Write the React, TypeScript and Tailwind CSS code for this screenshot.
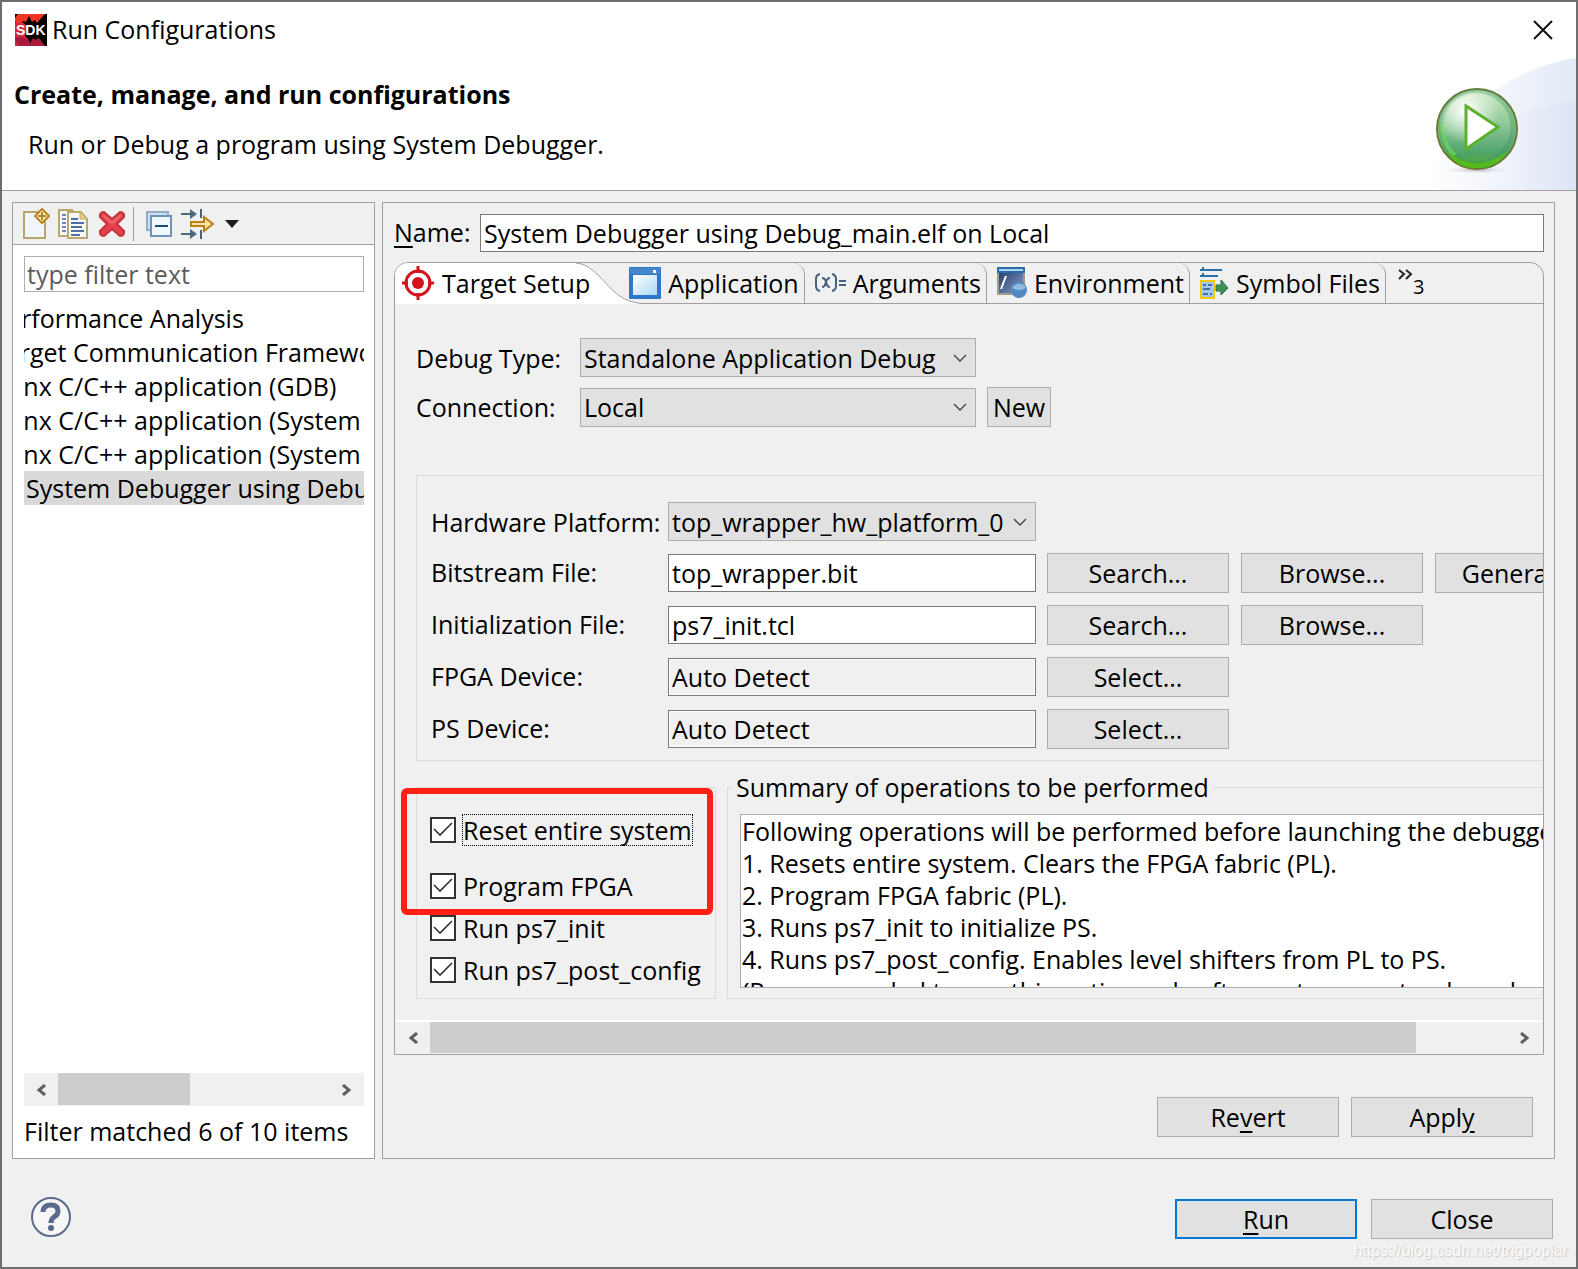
import { useState, type ReactNode } from "react";

const launchItems = [
  { label: "Performance Analysis", cut: "-ml-8" },
  { label: "Target Communication Framework", cut: "-ml-8" },
  { label: "Xilinx C/C++ application (GDB)", cut: "-ml-[34px]" },
  { label: "Xilinx C/C++ application (System Debugger)", cut: "-ml-[34px]" },
  { label: "Xilinx C/C++ application (System Debugger on QEMU)", cut: "-ml-[34px]" },
];

const summary = `Following operations will be performed before launching the debugger.
1. Resets entire system. Clears the FPGA fabric (PL).
2. Program FPGA fabric (PL).
3. Runs ps7_init to initialize PS.
4. Runs ps7_post_config. Enables level shifters from PL to PS.
(Recommended to use this option only after system reset or board power ON).`;

function SdkIcon() {
  return (
    <svg width="32" height="32" viewBox="0 0 32 32">
      <rect width="32" height="32" fill="#000" />
      <path d="M3 0H30L22 9L20 6L17 8L14 2L11 8L8 7L6 12L0 8V4Z" fill="#ee3524" />
      <path d="M0 9H9L12 13L10 22L13 25L9 32H0Z" fill="#d5283a" />
      <path d="M4 32L0 26V23H9L11 26L13 24L15 29L18 24L20 26L24 24L30 32Z" fill="#a8193d" />
      <text x="1" y="21" fontSize="14" fontWeight="bold" fill="#fff" fontFamily="Liberation Sans, sans-serif">
        SDK
      </text>
    </svg>
  );
}

function RunBadge() {
  return (
    <svg width="88" height="90" viewBox="0 0 88 90">
      <defs>
        <linearGradient id="ball" x1="0" y1="0" x2="0" y2="1">
          <stop offset="0" stopColor="#c9e9bd" />
          <stop offset="0.45" stopColor="#8cc795" />
          <stop offset="0.8" stopColor="#4fa36c" />
          <stop offset="1" stopColor="#52b51f" />
        </linearGradient>
        <radialGradient id="shine" cx="0.35" cy="0.25" r="0.45">
          <stop offset="0" stopColor="#fff" />
          <stop offset="1" stopColor="#fff" stopOpacity="0" />
        </radialGradient>
        <radialGradient id="shade">
          <stop offset="0" stopColor="#a99aa9" stopOpacity="0.8" />
          <stop offset="1" stopColor="#fff" stopOpacity="0" />
        </radialGradient>
      </defs>
      <ellipse cx="42" cy="83" rx="38" ry="4" fill="url(#shade)" />
      <circle cx="42" cy="42" r="40" fill="url(#ball)" stroke="#6c7a34" strokeWidth="2" />
      <circle cx="42" cy="40" r="36" fill="none" stroke="#3f9160" strokeWidth="5" opacity="0.35" />
      <path d="M8 36A35 35 0 0 0 20 68" fill="none" stroke="#6fdc5c" strokeWidth="4" opacity="0.7" />
      <path d="M12 64Q42 89 72 64Q64 81 42 81Q20 81 12 64Z" fill="#53bb1c" />
      <circle cx="42" cy="42" r="37" fill="url(#shine)" />
      <path d="M31 19L63 40L31 62Z" fill="#fff" stroke="#5bb12e" strokeWidth="3" />
    </svg>
  );
}

function HeaderSwoosh() {
  return (
    <svg className="absolute right-0 bottom-0" width="150" height="134" viewBox="0 0 150 134">
      <defs>
        <linearGradient id="swoosh" x1="0" y1="0" x2="1" y2="0">
          <stop offset="0" stopColor="#fff" />
          <stop offset="1" stopColor="#e3eaf8" />
        </linearGradient>
        <linearGradient id="swoosh2" x1="0" y1="0" x2="1" y2="0">
          <stop offset="0" stopColor="#fff" stopOpacity="0" />
          <stop offset="1" stopColor="#dde3f6" />
        </linearGradient>
      </defs>
      <path d="M0 134Q40 20 150 2V134Z" fill="url(#swoosh)" />
      <path d="M10 134Q60 50 150 46V134Z" fill="url(#swoosh2)" />
    </svg>
  );
}

function NewIcon() {
  return (
    <svg width="28" height="32" viewBox="0 0 28 32">
      <path d="M2 4H23V30H2Z" fill="#f1f6fd" stroke="#b5a66c" strokeWidth="2" />
      <path d="M20 1L27 8L20 15L13 8Z" fill="#fdf3cb" stroke="#b5851b" strokeWidth="2" />
      <path d="M20 4V12M16 8H24" stroke="#b5851b" strokeWidth="2" />
    </svg>
  );
}

function CopyIcon() {
  return (
    <svg width="32" height="32" viewBox="0 0 32 32">
      <path d="M2 2H15L20 7V28H2Z" fill="#f6f8fb" stroke="#b9a76c" strokeWidth="2" />
      <path d="M5 7H9M5 11H9M5 15H9M5 19H9M5 23H9" stroke="#7288b4" strokeWidth="2" />
      <path d="M11 4H24L30 11V30H11Z" fill="#f6f8fb" stroke="#b9a76c" strokeWidth="2" />
      <path d="M23 4V11H30Z" fill="#e3cf86" stroke="#c6ae66" />
      <path d="M14 11H21M14 15H27M14 19H25M14 23H27M14 27H23" stroke="#4e6ea8" strokeWidth="2" />
    </svg>
  );
}

function DeleteIcon() {
  return (
    <svg width="28" height="28" viewBox="0 0 28 28">
      <path
        d="M6 2L14 9L22 2Q27 2 26 7L19 14L26 21Q27 26 22 26L14 19L6 26Q1 26 2 21L9 14L2 7Q1 2 6 2Z"
        fill="#e2404a"
        stroke="#c9343c"
        strokeWidth="2"
      />
      <path d="M5 5L14 13L23 5" fill="none" stroke="#ec6d70" strokeWidth="2" />
    </svg>
  );
}

function CollapseIcon() {
  return (
    <svg width="28" height="28" viewBox="0 0 28 28">
      <path d="M2 20V2H23V20Z" fill="#cfe0f1" stroke="#93acc7" strokeWidth="2" />
      <path d="M6 6H26V26H6Z" fill="#f0f8fe" stroke="#6f93b8" strokeWidth="2" />
      <path d="M10 16H23" stroke="#154a7d" strokeWidth="2" />
    </svg>
  );
}

function FilterIcon() {
  return (
    <svg width="33" height="32" viewBox="0 0 33 32">
      <path d="M0 6H11M0 26H11" stroke="#4a6b7c" strokeWidth="2" />
      <path d="M9 1L16 6L9 11ZM9 21L16 26L9 31Z" fill="#4a6b7c" />
      <path d="M20 1V10M20 22V31" stroke="#4a6077" strokeWidth="2" />
      <path d="M10 14H23V9L32 16L23 23V18H10Z" fill="#fbe3a3" stroke="#bd7f16" strokeWidth="2" />
    </svg>
  );
}

function TargetIcon() {
  return (
    <svg width="32" height="34" viewBox="0 0 32 34">
      <circle cx="16" cy="17" r="12" fill="#fff" stroke="#d4121c" strokeWidth="3" />
      <circle cx="16" cy="17" r="6" fill="#d4121c" />
      <path d="M16 0V7M16 27V34M0 17H6M26 17H32" stroke="#d4121c" strokeWidth="3" />
    </svg>
  );
}

function WindowIcon() {
  return (
    <svg width="32" height="32" viewBox="0 0 32 32">
      <defs>
        <linearGradient id="pane" x1="0" y1="0" x2="1" y2="1">
          <stop offset="0" stopColor="#fff" />
          <stop offset="1" stopColor="#a9d9f3" />
        </linearGradient>
      </defs>
      <rect width="32" height="32" rx="1" fill="#2f77cb" />
      <rect x="1" y="1" width="30" height="6" fill="#4488c8" />
      <rect x="4" y="8" width="24" height="20" fill="url(#pane)" />
      <rect x="24" y="3" width="3" height="3" fill="#fff" />
    </svg>
  );
}

function ArgsIcon() {
  return (
    <svg width="31" height="20" viewBox="0 0 31 20" fill="none" stroke="#47607f" strokeWidth="2">
      <path d="M5 1Q1 2 1 6V13Q1 17 5 18M17 1Q21 2 21 6V13Q21 17 17 18" />
      <path d="M7 5Q10 5 11 9Q12 14 15 14M15 5Q12 5 11 9Q10 14 7 14" />
      <path d="M24 8H31M24 12H31" />
    </svg>
  );
}

function EnvIcon() {
  return (
    <svg width="30" height="32" viewBox="0 0 30 32">
      <defs>
        <linearGradient id="term" x1="0" y1="0" x2="1" y2="1">
          <stop offset="0" stopColor="#1b3267" />
          <stop offset="1" stopColor="#8ba3c8" />
        </linearGradient>
      </defs>
      <rect x="1" y="1" width="26" height="26" fill="url(#term)" stroke="#a39c8a" strokeWidth="2" />
      <rect width="28" height="6" fill="#2f6aa9" />
      <path d="M2 3H26" stroke="#a7d5ef" strokeWidth="2" />
      <path d="M4 22L9 9" stroke="#fff" strokeWidth="2" />
      <circle cx="22" cy="23" r="8" fill="#5289c4" />
      <path d="M15 21A8 8 0 0 1 29 21Q22 25 15 21Z" fill="#93b9df" />
    </svg>
  );
}

function SymbolIcon() {
  return (
    <svg width="29" height="32" viewBox="0 0 29 32">
      <path d="M0 3H22M0 9H18" stroke="#2c6da3" strokeWidth="2" />
      <path d="M3 0V4M3 6V10" stroke="#2c6da3" strokeWidth="2" />
      <rect x="1" y="14" width="13" height="17" fill="#9fc8f5" stroke="#fbc800" strokeWidth="2" />
      <path d="M3 18H6M8 18H12M3 22H10M3 27H8M10 27H12" stroke="#53699c" strokeWidth="2" />
      <path d="M16 18H21V13L28 21L21 28V24H16Z" fill="#3f9450" stroke="#206f4b" />
    </svg>
  );
}

function HelpIcon() {
  return (
    <svg width="40" height="40" viewBox="0 0 40 40">
      <circle cx="20" cy="20" r="19" fill="#f6f6f6" stroke="#5a6a8c" strokeWidth="2" />
      <path d="M12 15Q12 8 20 8Q27 8 27 14Q27 18 23 20Q20 22 20 26" fill="none" stroke="#5a6a8c" strokeWidth="5" />
      <circle cx="20" cy="31" r="3" fill="#5a6a8c" />
    </svg>
  );
}

function Chevron({ right = false }: { right?: boolean }) {
  return (
    <svg width="10" height="12" viewBox="0 0 10 12" fill="none" stroke="#5f5f5f" strokeWidth="3">
      <path d={right ? "M1 1L7 6L1 11" : "M9 1L3 6L9 11"} />
    </svg>
  );
}

function PushButton({
  children,
  primary = false,
  width = "w-[182px]",
}: {
  children: ReactNode;
  primary?: boolean;
  width?: string;
}) {
  return (
    <button
      type="button"
      className={`h-10 shrink-0 bg-[#e1e1e1] ${width} ${primary ? "border-2 border-[#0078d7]" : "border border-[#adadad]"}`}
    >
      {children}
    </button>
  );
}

function Dropdown({ id, value, className }: { id: string; value: string; className: string }) {
  return (
    <div className={`grid shrink-0 items-center ${className}`}>
      <select
        id={id}
        defaultValue={value}
        className="col-start-1 row-start-1 h-[39px] w-full appearance-none border border-[#adadad] bg-[#e1e1e1] px-[3px]"
      >
        <option>{value}</option>
      </select>
      <svg
        className="pointer-events-none col-start-1 row-start-1 mr-[9px] justify-self-end"
        width="14"
        height="8"
        viewBox="0 0 14 8"
        fill="none"
        stroke="#444"
      >
        <path d="M1 1L7 7L13 1" strokeWidth="1.4" />
      </svg>
    </div>
  );
}

function FieldRow({
  id,
  label,
  value,
  readOnly = false,
  buttons,
}: {
  id: string;
  label: string;
  value: string;
  readOnly?: boolean;
  buttons: string[];
}) {
  return (
    <div className="flex h-10 items-center">
      <label htmlFor={id} className="w-[237px] shrink-0 pb-[2px]">
        {label}
      </label>
      <input
        id={id}
        defaultValue={value}
        readOnly={readOnly}
        className={`mr-[11px] h-[38px] w-[368px] shrink-0 border border-[#7a7a7a] px-[3px] ${
          readOnly ? "bg-[#f0f0f0] inset-ring inset-ring-white" : "bg-white"
        }`}
      />
      <div className="flex gap-3">
        {buttons.map((b) => (
          <PushButton key={b}>{b}</PushButton>
        ))}
      </div>
    </div>
  );
}

function Check({ label, focused = false }: { label: string; focused?: boolean }) {
  const [on, setOn] = useState(true);
  return (
    <label className="flex h-8 items-center gap-[6px]">
      <span className="grid">
        <input
          type="checkbox"
          checked={on}
          onChange={() => setOn(!on)}
          className="col-start-1 row-start-1 size-[26px] appearance-none border-2 border-[#333] bg-white"
        />
        {on && (
          <svg className="pointer-events-none col-start-1 row-start-1" width="26" height="26" viewBox="0 0 26 26">
            <path d="M4 12L10 18L22 6" fill="none" stroke="#333" strokeWidth="1.6" />
          </svg>
        )}
      </span>
      <span className={`border border-dotted leading-[30px] ${focused ? "border-black" : "border-transparent"}`}>
        {label}
      </span>
    </label>
  );
}

function Tab({ icon, children }: { icon: ReactNode; children: ReactNode }) {
  return (
    <button
      type="button"
      role="tab"
      aria-selected="false"
      className="flex h-10 shrink-0 items-center gap-[7px] rounded-tr-[12px] border-r border-[#a0a0a0] pr-[5px] pl-[10px]"
    >
      {icon}
      {children}
    </button>
  );
}

export default function App() {
  return (
    <div className="flex min-h-screen flex-col overflow-hidden border-2 border-[#6e6e70] bg-[#f0f0f0] font-['Open_Sans',sans-serif] text-[25px] leading-[34px] text-black">
      <header className="relative h-[189px] border-b border-[#a0a0a0] bg-white">
        <HeaderSwoosh />
        <div className="flex items-center gap-[5px] pt-[10px] pl-[13px]">
          <SdkIcon />
          <h1 className="pb-px">Run Configurations</h1>
          <button type="button" aria-label="Close window" className="mr-[23px] ml-auto">
            <svg width="20" height="20" viewBox="0 0 20 20" stroke="#111" strokeWidth="2">
              <path d="M1 1L19 19M19 1L1 19" />
            </svg>
          </button>
        </div>
        <div className="flex justify-between pl-3">
          <div className="pt-[30px]">
            <h2 className="font-bold">Create, manage, and run configurations</h2>
            <p className="pt-4 pl-[14px]">Run or Debug a program using System Debugger.</p>
          </div>
          <div className="relative mt-10 mr-[53px]">
            <RunBadge />
          </div>
        </div>
      </header>

      <main className="flex flex-1 gap-[7px] pt-[11px] pr-[21px] pl-[10px]">
        <section className="flex w-[363px] shrink-0 flex-col border border-[#a0a0a0] bg-white">
          <div className="flex h-[42px] items-center border-b border-[#a0a0a0] bg-[#f0f0f0] pl-[9px]">
            <button type="button" aria-label="New launch configuration">
              <NewIcon />
            </button>
            <button type="button" aria-label="Duplicate" className="ml-[7px]">
              <CopyIcon />
            </button>
            <button type="button" aria-label="Delete" className="ml-[9px]">
              <DeleteIcon />
            </button>
            <span className="mx-[7px] h-[34px] w-px bg-[#a0a0a0]" />
            <button type="button" aria-label="Collapse all" className="ml-1">
              <CollapseIcon />
            </button>
            <button type="button" aria-label="Filter" className="ml-2">
              <FilterIcon />
            </button>
            <button type="button" aria-label="Filter menu" className="ml-[11px]">
              <svg width="14" height="8" viewBox="0 0 14 8">
                <path d="M0 0H14L7 8Z" fill="#1c1c1c" />
              </svg>
            </button>
          </div>
          <div className="flex flex-1 flex-col pt-[11px] pr-[10px] pl-[11px]">
            <input
              aria-label="Filter"
              placeholder="type filter text"
              className="h-9 w-full border border-[#abadb3] px-[2px] placeholder:text-[#5c5c5c]"
            />
            <ul className="mt-[9px] flex-1 overflow-hidden whitespace-nowrap">
              {launchItems.map((item) => (
                <li key={item.label} className="h-[34px] overflow-hidden">
                  <span className={`block ${item.cut}`}>{item.label}</span>
                </li>
              ))}
              <li className="h-[34px] overflow-hidden bg-[#d9d9d9] pl-[2px]">System Debugger using Debug_main.elf on Local</li>
            </ul>
            <div className="flex h-[33px] items-center bg-[#f0f0f0]">
              <span className="flex w-[34px] justify-center">
                <Chevron />
              </span>
              <span className="h-8 w-[132px] self-start bg-[#cdcdcd]" />
              <span className="ml-auto flex w-[34px] justify-center">
                <Chevron right />
              </span>
            </div>
            <p className="mt-2 mb-[10px]">Filter matched 6 of 10 items</p>
          </div>
        </section>

        <section className="flex min-w-0 flex-1 flex-col border border-[#a0a0a0] pt-[11px] pr-[10px] pl-[11px]">
          <div className="flex items-center">
            <label htmlFor="name" className="w-[86px] shrink-0 pb-[2px]">
              <u className="underline-offset-4">N</u>ame:
            </label>
            <input
              id="name"
              defaultValue="System Debugger using Debug_main.elf on Local"
              className="h-[38px] min-w-0 flex-1 border border-[#7a7a7a] bg-white px-[3px]"
            />
          </div>

          <div className="mt-[10px] flex flex-col overflow-hidden rounded-t-[14px] border border-[#a0a0a0]">
            <div role="tablist" className="flex border-b border-[#a0a0a0]">
              <button
                type="button"
                role="tab"
                aria-selected="true"
                className="relative flex h-10 shrink-0 items-center gap-2 pr-[29px] pl-[7px]"
              >
                <svg className="absolute top-0 left-0 h-[41px] w-[244px]" viewBox="0 0 244 41">
                  <path d="M0 0H181C206 2 214 38 244 40V41H0Z" fill="#fff" />
                  <path d="M181 0C206 2 214 38 244 40" fill="none" stroke="#a0a0a0" />
                </svg>
                <span className="relative">
                  <TargetIcon />
                </span>
                <span className="relative">Target Setup</span>
              </button>
              <span className="relative flex">
                <Tab icon={<WindowIcon />}>Application</Tab>
              </span>
              <Tab icon={<ArgsIcon />}>Arguments</Tab>
              <Tab icon={<EnvIcon />}>Environment</Tab>
              <Tab icon={<SymbolIcon />}>Symbol Files</Tab>
              <button type="button" aria-label="Show 3 more tabs" className="flex h-10 items-start pt-[6px] pl-3">
                <svg width="15" height="11" viewBox="0 0 15 11" fill="none" stroke="#222" strokeWidth="2">
                  <path d="M1 1L6 5L1 10M8 1L13 5L8 10" />
                </svg>
                <span className="pt-[6px] text-[20px] leading-6">3</span>
              </button>
            </div>

            <div className="overflow-hidden pt-[34px] pl-[21px]">
              <div className="flex items-center">
                <label htmlFor="debugType" className="w-[164px] shrink-0">
                  Debug Type:
                </label>
                <Dropdown id="debugType" value="Standalone Application Debug" className="w-[396px]" />
              </div>
              <div className="mt-[10px] flex items-center">
                <label htmlFor="connection" className="w-[164px] shrink-0">
                  Connection:
                </label>
                <Dropdown id="connection" value="Local" className="mr-[11px] w-[396px]" />
                <PushButton width="w-16">New</PushButton>
              </div>

              <div className="mt-12 border border-r-0 border-[#dcdcdc] pt-[26px] pb-[11px] pl-[14px]">
                <div className="flex items-center">
                  <label htmlFor="platform" className="w-[237px] shrink-0">
                    Hardware Platform:
                  </label>
                  <Dropdown id="platform" value="top_wrapper_hw_platform_0" className="w-[368px]" />
                </div>
                <div className="mt-3 flex flex-col gap-3">
                  <FieldRow
                    id="bitstream"
                    label="Bitstream File:"
                    value="top_wrapper.bit"
                    buttons={["Search...", "Browse...", "Generate..."]}
                  />
                  <FieldRow
                    id="init"
                    label="Initialization File:"
                    value="ps7_init.tcl"
                    buttons={["Search...", "Browse..."]}
                  />
                  <FieldRow id="fpga" label="FPGA Device:" value="Auto Detect" readOnly buttons={["Select..."]} />
                  <FieldRow id="ps" label="PS Device:" value="Auto Detect" readOnly buttons={["Select..."]} />
                </div>
              </div>

              <div className="mt-[10px] flex gap-[11px]">
                <div className="relative mt-4 w-[300px] shrink-0 border border-[#dcdcdc] pt-[26px] pb-3 pl-[13px]">
                  <div className="absolute top-0 -left-4 h-[127px] w-[312px] rounded-[6px] border-[6px] border-[#ff2015]" />
                  <div className="relative flex flex-col">
                    <Check label="Reset entire system" focused />
                    <div className="mt-6 flex flex-col gap-[10px]">
                      <Check label="Program FPGA" />
                      <Check label="Run ps7_init" />
                      <Check label="Run ps7_post_config" />
                    </div>
                  </div>
                </div>
                <fieldset className="min-w-0 flex-1 border border-r-0 border-[#dcdcdc] pb-[10px] pl-3">
                  <legend className="-ml-2 px-1 leading-8">Summary of operations to be performed</legend>
                  <textarea
                    readOnly
                    wrap="off"
                    aria-label="Summary of operations"
                    defaultValue={summary}
                    className="mt-[11px] block h-[174px] w-full resize-none overflow-hidden border border-r-0 border-[#abadb3] bg-white px-px leading-8"
                  />
                </fieldset>
              </div>
            </div>

            <div className="mx-px mt-[21px] flex h-[34px] items-center border-t-2 border-b border-t-white border-b-[#f0f0f0]">
              <span className="flex w-[34px] justify-center">
                <Chevron />
              </span>
              <span className="h-full w-[86%] bg-[#cdcdcd]" />
              <span className="ml-auto flex w-[34px] justify-center">
                <Chevron right />
              </span>
            </div>
          </div>

          <div className="mt-auto mb-[21px] flex justify-end gap-3 pr-[11px]">
            <PushButton>
              Re<u className="underline-offset-4">v</u>ert
            </PushButton>
            <PushButton>
              Appl<u className="underline-offset-4">y</u>
            </PushButton>
          </div>
        </section>
      </main>

      <footer className="relative flex h-[108px] items-start pt-[38px] pr-[23px] pl-[29px]">
        <button type="button" aria-label="Help">
          <HelpIcon />
        </button>
        <div className="ml-auto flex gap-[14px] pt-[2px]">
          <PushButton primary>
            <u className="underline-offset-4">R</u>un
          </PushButton>
          <PushButton>Close</PushButton>
        </div>
        <span className="absolute right-2 bottom-1 font-['Liberation_Sans',sans-serif] text-[16px] leading-6 text-[#fafafa] [text-shadow:1px_1px_1px_#c8c8c8]">
          https://blog.csdn.net/trigpoplar
        </span>
      </footer>
    </div>
  );
}
